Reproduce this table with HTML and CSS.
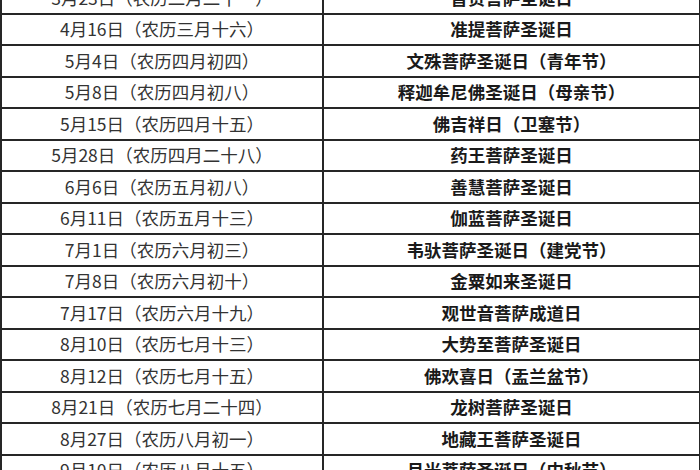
FILE: index.html
```html
<!DOCTYPE html>
<html lang="zh-CN">
<head>
<meta charset="utf-8">
<link rel="stylesheet" href="styles.css">
</head>
<body>
<table class="festivals">
<tbody>
<tr><td class="date">3月23日（农历二月二十一）</td><td class="name">普贤菩萨圣诞日</td></tr>
<tr><td class="date">4月16日（农历三月十六）</td><td class="name">准提菩萨圣诞日</td></tr>
<tr><td class="date">5月4日（农历四月初四）</td><td class="name">文殊菩萨圣诞日（青年节）</td></tr>
<tr><td class="date">5月8日（农历四月初八）</td><td class="name">释迦牟尼佛圣诞日（母亲节）</td></tr>
<tr><td class="date">5月15日（农历四月十五）</td><td class="name">佛吉祥日（卫塞节）</td></tr>
<tr><td class="date">5月28日（农历四月二十八）</td><td class="name">药王菩萨圣诞日</td></tr>
<tr><td class="date">6月6日（农历五月初八）</td><td class="name">善慧菩萨圣诞日</td></tr>
<tr><td class="date">6月11日（农历五月十三）</td><td class="name">伽蓝菩萨圣诞日</td></tr>
<tr><td class="date">7月1日（农历六月初三）</td><td class="name">韦驮菩萨圣诞日（建党节）</td></tr>
<tr><td class="date">7月8日（农历六月初十）</td><td class="name">金粟如来圣诞日</td></tr>
<tr><td class="date">7月17日（农历六月十九）</td><td class="name">观世音菩萨成道日</td></tr>
<tr><td class="date">8月10日（农历七月十三）</td><td class="name">大势至菩萨圣诞日</td></tr>
<tr><td class="date">8月12日（农历七月十五）</td><td class="name">佛欢喜日（盂兰盆节）</td></tr>
<tr><td class="date">8月21日（农历七月二十四）</td><td class="name">龙树菩萨圣诞日</td></tr>
<tr><td class="date">8月27日（农历八月初一）</td><td class="name">地藏王菩萨圣诞日</td></tr>
<tr><td class="date">9月10日（农历八月十五）</td><td class="name">月光菩萨圣诞日（中秋节）</td></tr>
</tbody>
</table>
</body>
</html>
```
FILE: styles.css
```css
html, body {
  margin: 0;
  padding: 0;
  background: #ffffff;
  overflow: hidden;
}
body {
  font-family: "Noto Sans CJK SC", "Noto Sans", sans-serif;
  font-size: 17.5px;
  color: #333333;
}
.festivals {
  border-collapse: collapse;
  width: 701px;
  margin-top: -19px;
  table-layout: fixed;
}
.festivals td {
  border: 2px solid #262626;
  height: 29.5px;
  padding: 0;
  text-align: center;
  vertical-align: middle;
  line-height: 20px;
  white-space: nowrap;
}
.festivals td.date {
  width: 320px;
  font-weight: 400;
  color: #333333;
}
.festivals td.name {
  font-weight: 700;
  color: #1a1a1a;
}
```
